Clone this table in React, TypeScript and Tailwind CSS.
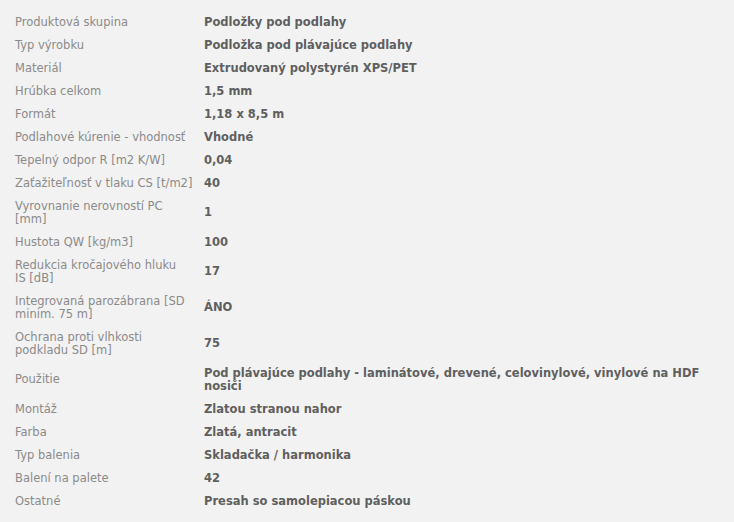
const rows: [string, string][] = [
  ['Produktová skupina', 'Podložky pod podlahy'],
  ['Typ výrobku', 'Podložka pod plávajúce podlahy'],
  ['Materiál', 'Extrudovaný polystyrén XPS/PET'],
  ['Hrúbka celkom', '1,5 mm'],
  ['Formát', '1,18 x 8,5 m'],
  ['Podlahové kúrenie - vhodnosť', 'Vhodné'],
  ['Tepelný odpor R [m2 K/W]', '0,04'],
  ['Zaťažiteľnosť v tlaku CS [t/m2]', '40'],
  ['Vyrovnanie nerovností PC\n[mm]', '1'],
  ['Hustota QW [kg/m3]', '100'],
  ['Redukcia kročajového hluku\nIS [dB]', '17'],
  ['Integrovaná parozábrana [SD\nminim. 75 m]', 'ÁNO'],
  ['Ochrana proti vlhkosti\npodkladu SD [m]', '75'],
  ['Použitie', 'Pod plávajúce podlahy - laminátové, drevené, celovinylové, vinylové na HDF nosiči'],
  ['Montáž', 'Zlatou stranou nahor'],
  ['Farba', 'Zlatá, antracit'],
  ['Typ balenia', 'Skladačka / harmonika'],
  ['Balení na palete', '42'],
  ['Ostatné', 'Presah so samolepiacou páskou'],
];

export default function App() {
  return (
    <div className="min-h-[522px] bg-[#f2f2f2] px-[10px] pt-[11px] pb-[10px] font-['DejaVu_Sans',Verdana,sans-serif] text-[11.5px] leading-[13.5px]">
      <table className="w-[714px] border-collapse">
        <tbody>
          {rows.map(([label, value]) => (
            <tr key={label}>
              <td className="h-[23px] w-[191px] whitespace-pre-line pl-[5px] pr-[2px] py-[4.5px] align-middle text-[#8a8a8a]">
                {label}
              </td>
              <td className="h-[23px] pl-[3px] pr-[5px] py-[4.5px] align-middle font-bold text-[#5f5f5f]">
                {value}
              </td>
            </tr>
          ))}
        </tbody>
      </table>
    </div>
  );
}
